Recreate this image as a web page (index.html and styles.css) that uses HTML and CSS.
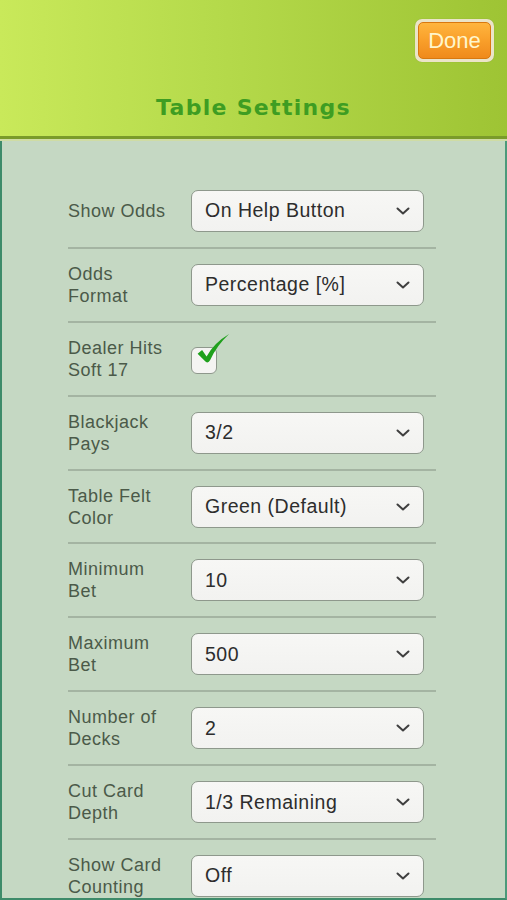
FILE: index.html
```html
<!DOCTYPE html>
<html>
<head>
<meta charset="utf-8">
<link rel="stylesheet" href="styles.css">
</head>
<body>
<div class="header">
  <div class="done-wrap"><div class="done">Done</div></div>
  <h1 class="title">Table Settings</h1>
</div>
<div class="panel">
  <div class="rows">
    <div class="row"><div class="label">Show Odds</div><div class="select"><span>On Help Button</span><svg class="chev" viewBox="0 0 14 8"><path d="M1.5 1.5 L7 6.5 L12.5 1.5"/></svg></div></div>
    <div class="row"><div class="label">Odds<br>Format</div><div class="select"><span>Percentage [%]</span><svg class="chev" viewBox="0 0 14 8"><path d="M1.5 1.5 L7 6.5 L12.5 1.5"/></svg></div></div>
    <div class="row"><div class="label">Dealer Hits<br>Soft 17</div><div class="checkbox"><svg class="check" viewBox="0 0 40 40"><path d="M4 23 L13 32 Q16 34 18 30 Q25 14 39 1 Q22 11 14 26 L9 19 Z"/></svg></div></div>
    <div class="row"><div class="label">Blackjack<br>Pays</div><div class="select"><span>3/2</span><svg class="chev" viewBox="0 0 14 8"><path d="M1.5 1.5 L7 6.5 L12.5 1.5"/></svg></div></div>
    <div class="row"><div class="label">Table Felt<br>Color</div><div class="select"><span>Green (Default)</span><svg class="chev" viewBox="0 0 14 8"><path d="M1.5 1.5 L7 6.5 L12.5 1.5"/></svg></div></div>
    <div class="row"><div class="label">Minimum<br>Bet</div><div class="select"><span>10</span><svg class="chev" viewBox="0 0 14 8"><path d="M1.5 1.5 L7 6.5 L12.5 1.5"/></svg></div></div>
    <div class="row"><div class="label">Maximum<br>Bet</div><div class="select"><span>500</span><svg class="chev" viewBox="0 0 14 8"><path d="M1.5 1.5 L7 6.5 L12.5 1.5"/></svg></div></div>
    <div class="row"><div class="label">Number of<br>Decks</div><div class="select"><span>2</span><svg class="chev" viewBox="0 0 14 8"><path d="M1.5 1.5 L7 6.5 L12.5 1.5"/></svg></div></div>
    <div class="row"><div class="label">Cut Card<br>Depth</div><div class="select"><span>1/3 Remaining</span><svg class="chev" viewBox="0 0 14 8"><path d="M1.5 1.5 L7 6.5 L12.5 1.5"/></svg></div></div>
    <div class="row"><div class="label">Show Card<br>Counting</div><div class="select"><span>Off</span><svg class="chev" viewBox="0 0 14 8"><path d="M1.5 1.5 L7 6.5 L12.5 1.5"/></svg></div></div>
  </div>
</div>
</body>
</html>
```

FILE: styles.css
```css
* { box-sizing: border-box; }
html, body { margin: 0; padding: 0; }
body {
  width: 507px;
  height: 900px;
  overflow: hidden;
  font-family: "Liberation Sans", Arial, sans-serif;
  background: #c5d8c3;
}
.header {
  height: 141px;
  background: linear-gradient(90deg, #c9e95a 0%, #b6db4c 40%, #9ec434 100%);
  border-bottom: 2px solid #cfdca4;
  box-shadow: inset 0 -3px 0 #7a9b2a;
  display: flex;
  flex-direction: column;
  align-items: center;
}
.done-wrap {
  align-self: flex-end;
  margin: 19px 13px 0 0;
  padding: 3px;
  border-radius: 7px;
  background: #ebe4c8;
  box-shadow: 0 0 1px rgba(0,0,0,0.2);
}
.done {
  width: 73px;
  height: 37px;
  border-radius: 5px;
  border: 1px solid #d9780f;
  background: linear-gradient(180deg, #ffb53e 0%, #f99f2a 50%, #ef8a1c 100%);
  color: #fff6cc;
  font-family: "Liberation Sans", Arial, sans-serif;
  font-size: 22px;
  line-height: 35px;
  text-align: center;
}
.title {
  margin: 33px 0 0 0;
  font-family: "DejaVu Sans", Verdana, sans-serif;
  font-weight: bold;
  font-size: 22px;
  letter-spacing: 1.3px;
  color: #3e9d22;
}
.panel {
  height: 759px;
  border-left: 2px solid #3e8b6a;
  border-right: 2px solid #4c9a7a;
  border-bottom: 2px solid #3e8b6a;
  background: #c5d8c3;
  padding: 34px 0 0 66px;
}
.rows { width: 368px; }
.row {
  height: 73.9px;
  display: flex;
  align-items: center;
  border-bottom: 2px solid #a4b4a2;
}
.label {
  width: 123px;
  font-size: 18px;
  line-height: 22px;
  letter-spacing: 0.5px;
  color: #4b5a49;
}
.select {
  width: 233px;
  height: 42px;
  border: 1.5px solid #8e988c;
  border-radius: 7px;
  background: linear-gradient(180deg, #f7f7f5 0%, #f2f2f0 100%);
  display: flex;
  align-items: center;
  justify-content: space-between;
  padding: 0 13px 0 13px;
  font-size: 19.5px;
  letter-spacing: 0.5px;
  color: #2d2d2d;
}
.chev {
  width: 14px;
  height: 8px;
  fill: none;
  stroke: #3f3f3f;
  stroke-width: 2;
  stroke-linecap: round;
  stroke-linejoin: round;
}
.checkbox {
  width: 26px;
  height: 27px;
  border: 1.5px solid #8e988c;
  border-radius: 6px;
  background: #f4f4f2;
  position: relative;
  margin-top: 4px;
}
.check {
  position: absolute;
  left: 2px;
  top: -15px;
  width: 36px;
  height: 36px;
  fill: #1fa01c;
}
```
